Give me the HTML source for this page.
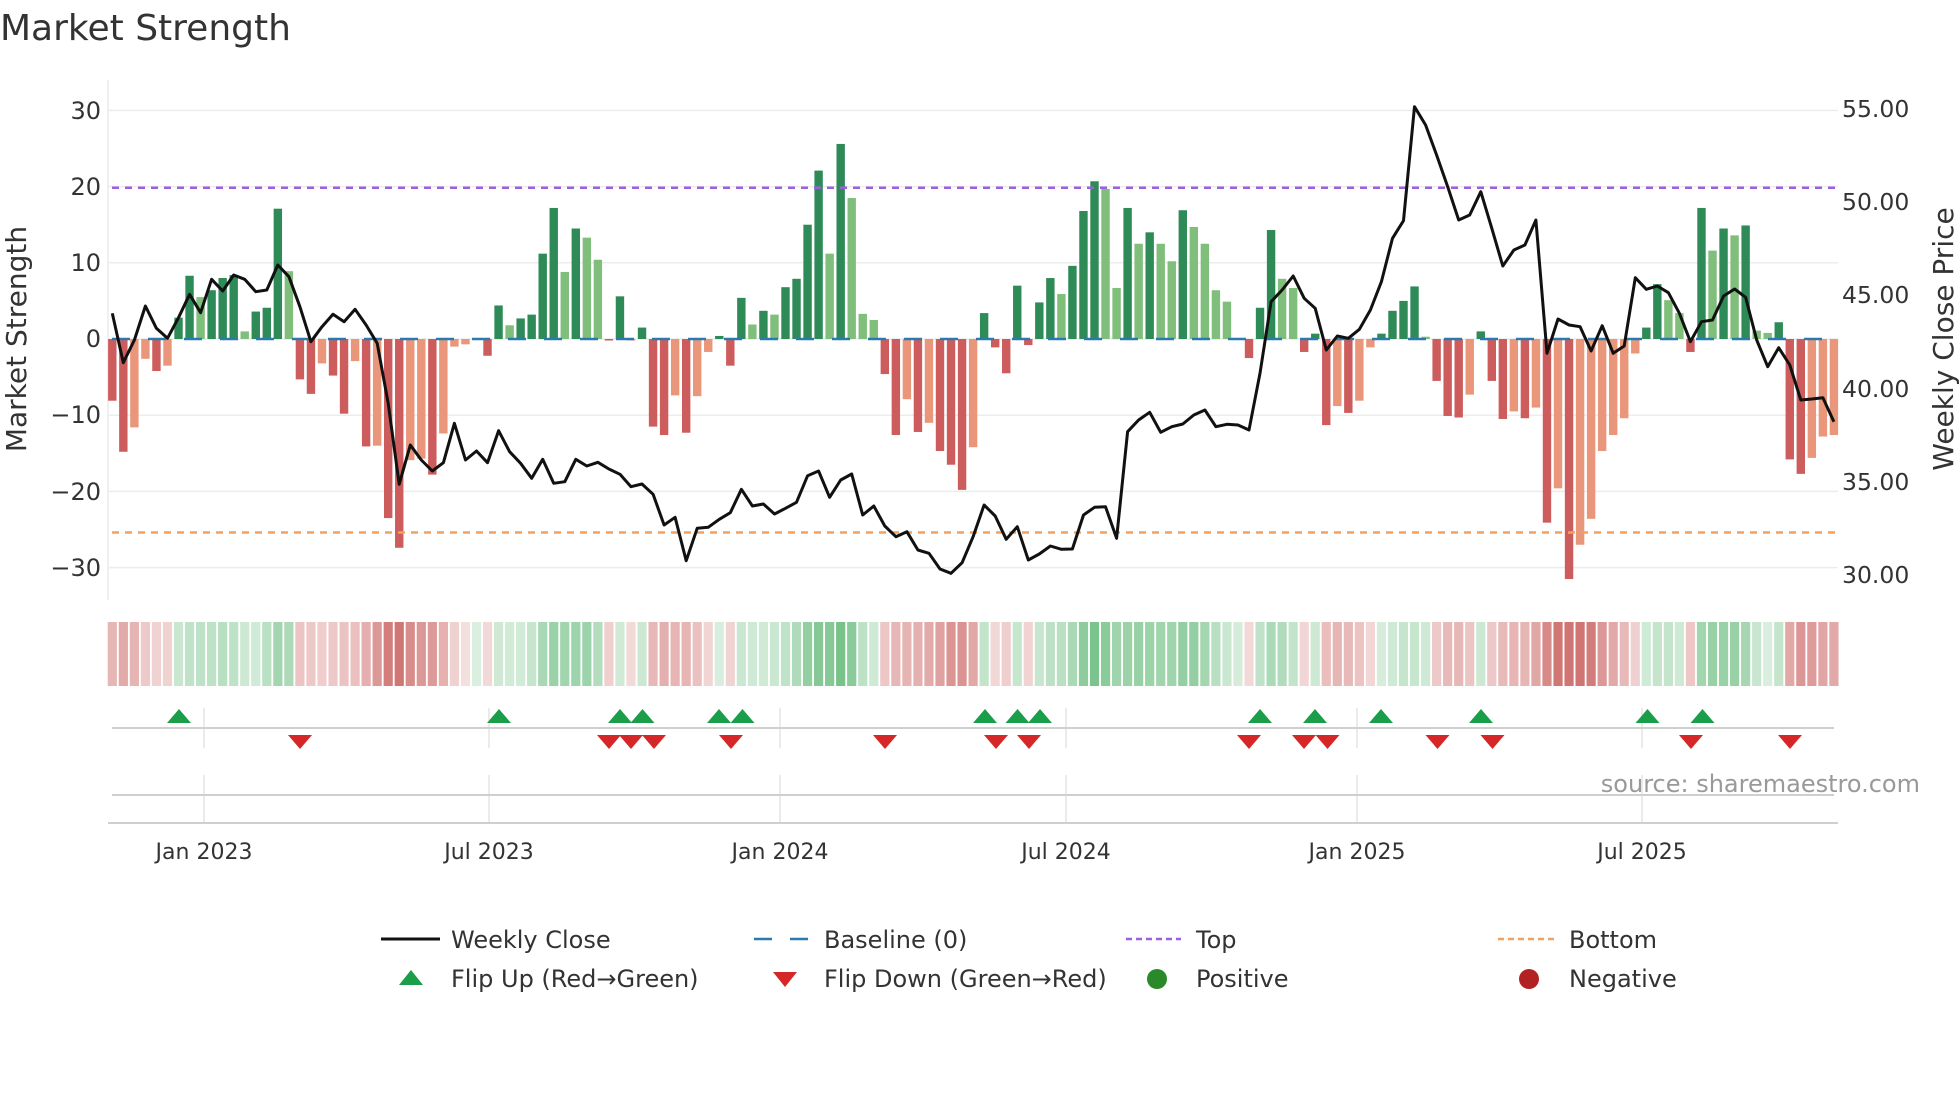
<!DOCTYPE html>
<html><head><meta charset="utf-8"><style>
html,body{margin:0;padding:0;background:#fff;}
body{width:1960px;height:1102px;overflow:hidden;font-family:"DejaVu Sans","Liberation Sans",sans-serif;}
svg text{font-family:"DejaVu Sans","Liberation Sans",sans-serif;fill:#333;}
</style></head><body>
<svg id="s" width="1960" height="1102" viewBox="0 0 1960 1102" xmlns="http://www.w3.org/2000/svg">
<text x="0" y="40" font-size="36">Market Strength</text>
<g id="grid" stroke="#ececec" stroke-width="1.5">
<line x1="108" x2="1838" y1="110.4" y2="110.4"/><line x1="108" x2="1838" y1="186.6" y2="186.6"/>
<line x1="108" x2="1838" y1="262.8" y2="262.8"/><line x1="108" x2="1838" y1="339" y2="339"/>
<line x1="108" x2="1838" y1="415.2" y2="415.2"/><line x1="108" x2="1838" y1="491.4" y2="491.4"/>
<line x1="108" x2="1838" y1="567.6" y2="567.6"/>
<line x1="108" x2="108" y1="80" y2="600"/>
</g>
<g font-size="24" text-anchor="end">
<text x="101" y="119">30</text><text x="101" y="195">20</text><text x="101" y="271">10</text>
<text x="101" y="347">0</text><text x="101" y="423">−10</text><text x="101" y="500">−20</text><text x="101" y="576">−30</text>
</g>
<g font-size="23.5">
<text x="1842" y="117">55.00</text><text x="1842" y="210">50.00</text><text x="1842" y="303">45.00</text>
<text x="1842" y="397">40.00</text><text x="1842" y="490">35.00</text><text x="1842" y="583">30.00</text>
</g>
<text font-size="28" transform="translate(26,339) rotate(-90)" text-anchor="middle">Market Strength</text>
<text font-size="28" transform="translate(1953,339) rotate(-90)" text-anchor="middle">Weekly Close Price</text>
<g id="bars"></g>
<line x1="112" x2="1836" y1="187.7" y2="187.7" stroke="#9d5fe0" stroke-width="2.5" stroke-dasharray="7,6"/>
<line x1="112" x2="1836" y1="532.5" y2="532.5" stroke="#f2a15f" stroke-width="2.5" stroke-dasharray="7,6"/>
<line x1="112" x2="1836" y1="339" y2="339" stroke="#2a7ab0" stroke-width="2.5" stroke-dasharray="18,18"/>
<polyline id="price" fill="none" stroke="#111" stroke-width="3" stroke-linejoin="round"/>
<g id="strip"></g>
<g stroke="#e4e4e4" stroke-width="1.5">
<line x1="204" x2="204" y1="708" y2="748"/><line x1="489" x2="489" y1="708" y2="748"/><line x1="780" x2="780" y1="708" y2="748"/>
<line x1="1066" x2="1066" y1="708" y2="748"/><line x1="1357" x2="1357" y1="708" y2="748"/><line x1="1642" x2="1642" y1="708" y2="748"/>
<line x1="204" x2="204" y1="775" y2="823"/><line x1="489" x2="489" y1="775" y2="823"/><line x1="780" x2="780" y1="775" y2="823"/>
<line x1="1066" x2="1066" y1="775" y2="823"/><line x1="1357" x2="1357" y1="775" y2="823"/><line x1="1642" x2="1642" y1="775" y2="823"/>
</g>
<line x1="112" x2="1834" y1="728" y2="728" stroke="#cfcfcf" stroke-width="2"/>
<line x1="112" x2="1834" y1="795" y2="795" stroke="#cfcfcf" stroke-width="2"/>
<line x1="108" x2="1838" y1="823" y2="823" stroke="#cfcfcf" stroke-width="2"/>
<g id="sig"></g>
<text x="1920" y="792" font-size="24" text-anchor="end" style="fill:#999">source: sharemaestro.com</text>
<g font-size="22" text-anchor="middle">
<text x="204" y="859">Jan 2023</text><text x="489" y="859">Jul 2023</text><text x="780" y="859">Jan 2024</text>
<text x="1066" y="859">Jul 2024</text><text x="1357" y="859">Jan 2025</text><text x="1642" y="859">Jul 2025</text>
</g>
<g font-size="24">
<line x1="381" x2="440" y1="939" y2="939" stroke="#111" stroke-width="3"/>
<text x="451" y="948">Weekly Close</text>
<line x1="754" x2="808" y1="939" y2="939" stroke="#2a7ab0" stroke-width="2.5" stroke-dasharray="18,18"/>
<text x="824" y="948">Baseline (0)</text>
<line x1="1126" x2="1181" y1="939" y2="939" stroke="#9d5fe0" stroke-width="2.5" stroke-dasharray="6,4"/>
<text x="1196" y="948">Top</text>
<line x1="1498" x2="1554" y1="939" y2="939" stroke="#f2a15f" stroke-width="2.5" stroke-dasharray="6,4"/>
<text x="1569" y="948">Bottom</text>
<polygon points="399,985 423,985 411,970" fill="#1a9e4a"/>
<text x="451" y="987">Flip Up (Red→Green)</text>
<polygon points="773,972 797,972 785,987" fill="#d62728"/>
<text x="824" y="987">Flip Down (Green→Red)</text>
<circle cx="1157" cy="979" r="10" fill="#2a8a2a"/>
<text x="1196" y="987">Positive</text>
<circle cx="1529" cy="979" r="10" fill="#b22222"/>
<text x="1569" y="987">Negative</text>
</g>
</svg>
<script>
var V=[[-8.1,'D'],[-14.8,'D'],[-11.6,'L'],[-2.6,'L'],[-4.2,'D'],[-3.5,'L'],[2.8,'D'],[8.3,'D'],[5.5,'L'],[6.4,'D'],[8.0,'D'],[8.4,'D'],[1.0,'L'],[3.6,'D'],[4.1,'D'],[17.1,'D'],[8.9,'L'],[-5.3,'D'],[-7.2,'D'],[-3.2,'L'],[-4.8,'D'],[-9.8,'D'],[-2.9,'L'],[-14.1,'D'],[-14.0,'L'],[-23.5,'D'],[-27.4,'D'],[-15.9,'L'],[-15.7,'L'],[-17.8,'D'],[-12.4,'L'],[-1.0,'L'],[-0.7,'L'],[0,'L'],[-2.2,'D'],[4.4,'D'],[1.8,'L'],[2.7,'D'],[3.2,'D'],[11.2,'D'],
[17.2,'D'],[8.8,'L'],[14.5,'D'],[13.3,'L'],[10.4,'L'],[-0.2,'D'],[5.6,'D'],[-0.2,'L'],[1.5,'D'],[-11.5,'D'],[-12.6,'D'],[-7.4,'L'],[-12.3,'D'],[-7.5,'L'],[-1.7,'L'],[0.4,'D'],[-3.5,'D'],[5.4,'D'],[1.9,'L'],[3.7,'D'],[3.2,'L'],[6.8,'D'],[7.9,'D'],[15.0,'D'],[22.1,'D'],[11.2,'L'],[25.6,'D'],[18.5,'L'],[3.3,'L'],[2.5,'L'],[-4.6,'D'],[-12.6,'D'],[-7.9,'L'],[-12.2,'D'],[-11.0,'L'],[-14.7,'D'],[-16.5,'D'],[-19.8,'D'],[-14.2,'L'],
[3.4,'D'],[-1.1,'D'],[-4.5,'D'],[7.0,'D'],[-0.8,'D'],[4.8,'D'],[8.0,'D'],[5.9,'L'],[9.6,'D'],[16.8,'D'],[20.7,'D'],[19.7,'L'],[6.7,'L'],[17.2,'D'],[12.5,'L'],[14.0,'D'],[12.5,'L'],[10.2,'L'],[16.9,'D'],[14.7,'L'],[12.5,'L'],[6.4,'L'],[4.9,'L'],[0,'L'],[-2.5,'D'],[4.1,'D'],[14.3,'D'],[7.9,'L'],[6.7,'L'],[-1.7,'D'],[0.7,'D'],[-11.3,'D'],[-8.8,'L'],[-9.7,'D'],[-8.1,'L'],[-1.1,'L'],[0.7,'D'],[3.7,'D'],[5.0,'D'],[6.9,'D'],
[0.3,'L'],[-5.5,'D'],[-10.1,'D'],[-10.3,'D'],[-7.3,'L'],[1.0,'D'],[-5.5,'D'],[-10.5,'D'],[-9.5,'L'],[-10.4,'D'],[-9.0,'L'],[-24.1,'D'],[-19.6,'L'],[-31.5,'D'],[-27.0,'L'],[-23.6,'L'],[-14.7,'L'],[-12.6,'L'],[-10.4,'L'],[-1.9,'L'],[1.5,'D'],[7.2,'D'],[5.1,'L'],[3.4,'L'],[-1.7,'D'],[17.2,'D'],[11.6,'L'],[14.5,'D'],[13.6,'L'],[14.9,'D'],[1.1,'L'],[0.8,'L'],[2.2,'D'],[-15.8,'D'],[-17.7,'D'],[-15.6,'L'],[-12.8,'L'],[-12.6,'L']];
var P=[670,818,750,648,715,745,683,613,668,568,603,555,568,605,600,525,560,650,755,710,673,695,658,705,760,940,1183,1065,1110,1143,1118,1000,1110,1083,1118,1022,1085,1120,1165,1108,
1180,1175,1108,1128,1117,1137,1153,1190,1182,1213,1305,1282,1412,1315,1312,1288,1268,1198,1248,1242,1272,1255,1237,1157,1143,1222,1170,1152,1275,1248,1308,1340,1325,1380,1390,1437,1450,1418,1340,
1245,1278,1348,1310,1410,1392,1368,1378,1377,1275,1252,1250,1345,1025,990,967,1027,1010,1002,975,960,1010,1003,1005,1020,850,635,600,558,625,655,780,738,745,718,660,575,445,392,50,
105,195,290,390,375,305,415,528,480,465,390,790,687,705,710,783,707,790,768,563,598,588,608,670,755,695,690,618,597,622,750,830,773,825,930,927,923,995];
var NS='http://www.w3.org/2000/svg';
function el(t,a,p){var e=document.createElementNS(NS,t);for(var k in a)e.setAttribute(k,a[k]);document.getElementById(p).appendChild(e);return e;}
var bx=function(i){return 112.3+i*11.036;};
var pts=[];
for(var i=0;i<V.length;i++){
 var v=V[i][0],d=V[i][1]=='D',x=bx(i);
 var c=v>=0?(d?'#2e8b57':'#7fbf7b'):(d?'#cd5c5c':'#e9967a');
 var h=Math.abs(v)*7.62; if(h<0.01)h=0;
 if(h>0)el('rect',{x:x-4.2,y:v>=0?339-h:339,width:8.4,height:h,fill:c},'bars');
 var a=Math.abs(V[Math.max(0,i-1)][0])*0.25+Math.abs(v)*0.5+Math.abs(V[Math.min(V.length-1,i+1)][0])*0.25;
 var t=Math.min(1,a/24);var k=0.18+0.68*t;
 var base=v>=0?[76,175,100]:[200,95,92];
 var r=Math.round(255+(base[0]-255)*k),g=Math.round(255+(base[1]-255)*k),b=Math.round(255+(base[2]-255)*k);
 el('rect',{x:x-4.6,y:622,width:9.2,height:64,fill:'rgb('+r+','+g+','+b+')'},'strip');
 if(i<P.length)pts.push(x.toFixed(1)+','+(P[i]/3+90).toFixed(1));
}
document.getElementById('price').setAttribute('points',pts.join(' '));
var U=[179,499,620,642.5,719,742.5,985,1017.5,1040,1260,1315,1381,1481,1647.5,1702.5];
var D=[300,609,631,654,731,885,996,1029,1249,1304,1327.5,1437.5,1492.5,1691,1790];
U.forEach(function(x){el('polygon',{points:(x-12)+',723 '+(x+12)+',723 '+x+',709',fill:'#1a9e4a'},'sig');});
D.forEach(function(x){el('polygon',{points:(x-12)+',735 '+(x+12)+',735 '+x+',749',fill:'#d62728'},'sig');});
</script>
</body></html>
